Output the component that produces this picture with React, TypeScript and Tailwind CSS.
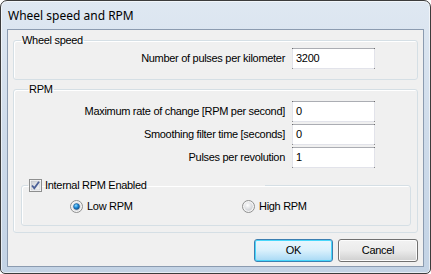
import React from 'react';

const FIELD_ROWS = [
  { label: 'Maximum rate of change [RPM per second]', value: '0' },
  { label: 'Smoothing filter time [seconds]', value: '0' },
  { label: 'Pulses per revolution', value: '1' },
];

function TextBox({ value }: { value: string }) {
  return (
    <div className="relative w-[83px] h-[21px] bg-white border border-[#e2e3ea] border-t-[#abadb3] pl-[3px] leading-[19px]">
      {value}
      {/* dark corner pixels of the classic textbox */}
      <span className="absolute -left-px -top-px w-px h-px bg-[#6d6d6d]" />
      <span className="absolute -right-px -top-px w-px h-px bg-[#6d6d6d]" />
      <span className="absolute -left-px -bottom-px w-px h-px bg-[#8c8c8c]" />
      <span className="absolute -right-px -bottom-px w-px h-px bg-[#8c8c8c]" />
    </div>
  );
}

function FieldRow({ label, value }: { label: string; value: string }) {
  return (
    <div className="flex items-center justify-end gap-[7px] pr-[42px]">
      <span>{label}</span>
      <TextBox value={value} />
    </div>
  );
}

function CheckBox() {
  return (
    <svg width="13" height="13" viewBox="0 0 13 13">
      <defs>
        <linearGradient id="cbg" x1="0" y1="0" x2="1" y2="1">
          <stop offset="0" stopColor="#cbcfd5" />
          <stop offset="1" stopColor="#f6f6f6" />
        </linearGradient>
      </defs>
      <rect x="0.5" y="0.5" width="12" height="12" fill="#fff" stroke="#8e8f8f" />
      <rect x="2" y="2" width="9" height="9" fill="url(#cbg)" stroke="#b0b5bc" strokeWidth="0.5" />
      <path d="M3 6.5 L5.3 9.2 L10 2.8" fill="none" stroke="#4a5f97" strokeWidth="1.8" />
    </svg>
  );
}

function Radio({ checked }: { checked: boolean }) {
  return (
    <svg width="13" height="13" viewBox="0 0 13 13">
      <defs>
        <radialGradient id="rOff" cx="0.4" cy="0.35" r="0.7">
          <stop offset="0" stopColor="#ffffff" />
          <stop offset="1" stopColor="#c9ccd1" />
        </radialGradient>
        <radialGradient id="rOn" cx="0.4" cy="0.35" r="0.7">
          <stop offset="0" stopColor="#8fdcff" />
          <stop offset="0.5" stopColor="#1c8ad9" />
          <stop offset="1" stopColor="#0c4b8a" />
        </radialGradient>
      </defs>
      <circle cx="6.5" cy="6.5" r="6" fill="#f4f4f4" stroke="#8e8f8f" />
      <circle cx="6.5" cy="6.5" r="4.2" fill="url(#rOff)" />
      {checked && <circle cx="6.5" cy="6.5" r="3" fill="url(#rOn)" stroke="#1a4e7f" strokeWidth="0.5" />}
    </svg>
  );
}

export default function App() {
  return (
    <div className="w-[431px] h-[274px] bg-white text-[11px] tracking-[-0.3px] text-black font-['Liberation_Sans',Arial,sans-serif]">
      {/* Window frame */}
      <div className="w-[431px] h-[274px] flex flex-col border border-[#3c3c3c] rounded-t-[7px] rounded-b-[5px] bg-gradient-to-b from-[#dfe8f2] via-[#cedbea] to-[#c3d3e5] shadow-[inset_0_0_0_1px_rgba(255,255,255,0.6)] overflow-hidden">
        {/* Title bar */}
        <div className="h-[28px] flex items-center pl-[7px] pt-[1px] text-[12px] tracking-normal font-['Noto_Sans',sans-serif]">
          Wheel speed and RPM
        </div>

        {/* Client area */}
        <div className="mx-[6px] mb-[6px] flex-1 border border-[#8b9bb0] bg-[#f0f0f0] px-[5px] flex flex-col">
          {/* Wheel speed */}
          <fieldset className="mt-[4px] border border-[#d5dfe5] rounded-[3px] pb-[10px] shadow-[inset_1px_1px_0_#fff]">
            <legend className="ml-[7px] px-[1px] leading-[13px]">Wheel speed</legend>
            <div className="pt-[1px]">
              <FieldRow label="Number of pulses per kilometer" value="3200" />
            </div>
          </fieldset>

          {/* RPM */}
          <fieldset className="mt-[3px] border border-[#d5dfe5] rounded-[3px] pl-[7px] pr-[6px] pb-[6px] shadow-[inset_1px_1px_0_#fff]">
            <legend className="ml-[7px] px-[1px] leading-[13px]">RPM</legend>
            <div className="-ml-[7px] -mr-[6px] pt-[5px] flex flex-col gap-[2px]">
              {FIELD_ROWS.map((row) => (
                <FieldRow key={row.label} label={row.label} value={row.value} />
              ))}
            </div>

            <fieldset className="mt-[10px] border border-[#d5dfe5] rounded-[3px] pb-[12px] shadow-[inset_1px_1px_0_#fff]">
              <legend className="ml-[6px] w-[237px] h-[15px] flex items-center gap-[3px] px-[1px]">
                <CheckBox />
                <span>Internal RPM Enabled</span>
              </legend>
              <div className="pt-[7px] flex items-center h-[20px]">
                <div className="ml-[48px] w-[172px] flex items-center gap-[4px]">
                  <Radio checked />
                  <span>Low RPM</span>
                </div>
                <div className="flex items-center gap-[4px]">
                  <Radio checked={false} />
                  <span>High RPM</span>
                </div>
              </div>
            </fieldset>
          </fieldset>

          {/* Buttons */}
          <div className="mt-[6px] flex justify-end gap-[5px]">
            <button className="w-[79px] h-[23px] rounded-[3px] border border-[#3c7fb1] bg-gradient-to-b from-[#eaf6fd] via-[#d9f0fc] to-[#a7d9f5] shadow-[inset_0_0_0_1px_#48d7fb] leading-[21px]">
              OK
            </button>
            <button className="w-[80px] h-[23px] rounded-[3px] border border-[#707070] bg-gradient-to-b from-[#f2f2f2] via-[#ebebeb] to-[#cfcfcf] shadow-[inset_0_0_0_1px_#fcfcfc] leading-[21px]">
              Cancel
            </button>
          </div>
        </div>
      </div>
    </div>
  );
}
